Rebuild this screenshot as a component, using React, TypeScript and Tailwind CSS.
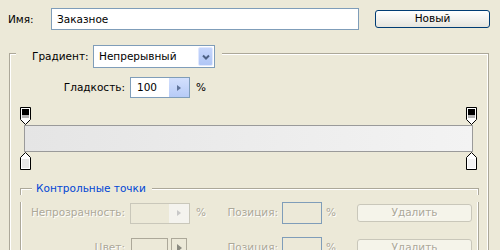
import React from "react"

const TopStop = () => (
    <svg width="11" height="18" viewBox="0 0 11 18" className="block">
        <path d="M0.5 0.5H10.5V12.5L5.5 17.5L0.5 12.5Z" fill="#fff" stroke="#000" />
        <rect x="2" y="2" width="7" height="6" fill="#000" />
        <rect x="2" y="8" width="7" height="3" fill="#b4b4b4" />
    </svg>
)

const BottomStop = ({ fill }: { fill: string }) => (
    <svg width="11" height="18" viewBox="0 0 11 18" className="block">
        <path d="M5.5 0.5L10.5 5.5V17.5H0.5V5.5Z" fill="#fff" stroke="#000" />
        <rect x="2" y="7" width="7" height="9" fill={fill} />
    </svg>
)

const dis = "text-[#ACA899] [text-shadow:1px_1px_0_#fff]"

export default function App() {
    return (
        <div className="w-[500px] h-[250px] overflow-hidden bg-[#ECE9D8] text-black text-[10.5px] font-['DejaVu_Sans',sans-serif]">

            {/* name row */}
            <div className="flex items-start pt-[8px] pl-[8px]">
                <div className="w-[43px] h-[22px] leading-[22px]">Имя:</div>
                <div className="w-[308px] h-[22px] border border-[#7F9DB9] bg-white pl-[5px] leading-[20px]">
                    Заказное
                </div>
                <div className="ml-[16px] mt-[2px] w-[115px] h-[18px] rounded-[3px] border border-[#003C74] bg-gradient-to-b from-white to-[#E6E5DE] flex items-center justify-center">
                    Новый
                </div>
            </div>

            {/* outer group */}
            <div className="mt-[15px] ml-[9px] w-[480px]">
                <div className="flex h-[23px]">
                    <div className="w-[7px] h-[15px] self-end border-t border-l border-[#ACA899] shadow-[inset_1px_1px_0_#fff]"></div>
                    <div className="ml-[16px] w-[61px] leading-[23px]">Градиент:</div>
                    <div className="w-[122px] h-[23px] border border-[#7F9DB9] bg-white flex items-center">
                        <div className="flex-1 pl-[5px]">Непрерывный</div>
                        <div className="w-[15px] h-[19px] mr-[1px] rounded-[2px] bg-gradient-to-b from-[#C6D6FC] to-[#B0C6F5] border border-[#E0E8FE] flex items-center justify-center">
                            <svg width="8" height="6" viewBox="0 0 8 6">
                                <path d="M1 1.5L4 4.5L7 1.5" fill="none" stroke="#4D6185" strokeWidth="2" />
                            </svg>
                        </div>
                    </div>
                    <div className="ml-[7px] flex-1 h-[15px] self-end border-t border-r border-[#ACA899] shadow-[inset_-1px_1px_0_#fff]"></div>
                </div>

                <div className="border-l border-r border-[#ACA899] shadow-[inset_1px_0_0_#fff,inset_-1px_0_0_#fff] pb-[20px]">
                    {/* smoothness */}
                    <div className="flex items-center pt-[9px]">
                        <div className="w-[115px] text-right">Гладкость:</div>
                        <div className="ml-[5px] w-[60px] h-[21px] border border-[#7F9DB9] bg-white flex">
                            <div className="flex-1 pl-[6px] leading-[19px]">100</div>
                            <div className="w-[20px] h-full bg-gradient-to-b from-[#D3E0FD] to-[#B7CBF7] flex items-center justify-center">
                                <svg width="4" height="6" viewBox="0 0 4 6">
                                    <path d="M0 0L4 3L0 6Z" fill="#5F7399" />
                                </svg>
                            </div>
                        </div>
                        <div className="ml-[6px]">%</div>
                    </div>

                    {/* gradient stops */}
                    <div className="mt-[9px] flex justify-between pl-[10px] pr-[11px]">
                        <TopStop />
                        <TopStop />
                    </div>
                    <div className="ml-[14px] mr-[15px] h-[27px] border border-[#9A9A9A] bg-gradient-to-r from-[#E5E5E5] to-[#F3F3F3]"></div>
                    <div className="flex justify-between pl-[10px] pr-[11px]">
                        <BottomStop fill="#E6E6E6" />
                        <BottomStop fill="#F3F3F3" />
                    </div>

                    {/* stops group */}
                    <div className="mt-[11px] ml-[10px] w-[459px]">
                        <div className="flex h-[14px]">
                            <div className="w-[12px] h-[7px] self-end border-t border-l border-[#ACA899] shadow-[inset_1px_1px_0_#fff]"></div>
                            <div className="ml-[4px] mr-[6px] leading-[14px] text-[#0046D5]">Контрольные точки</div>
                            <div className="flex-1 h-[7px] self-end border-t border-r border-[#ACA899] shadow-[inset_-1px_1px_0_#fff]"></div>
                        </div>
                        <div className="border-l border-r border-[#ACA899] shadow-[inset_1px_0_0_#fff,inset_-1px_0_0_#fff] pb-[20px]">
                            <div className="flex items-center mt-[7px] h-[22px]">
                                <div className={`w-[104px] text-right ${dis}`}>Непрозрачность:</div>
                                <div className="ml-[5px] w-[60px] h-[21px] border border-[#C9C7BA] flex">
                                    <div className="flex-1"></div>
                                    <div className="w-[20px] h-full bg-[#F4F3EE] flex items-center justify-center">
                                        <svg width="4" height="6" viewBox="0 0 4 6">
                                            <path d="M0 0L4 3L0 6Z" fill="#C8C8C8" />
                                        </svg>
                                    </div>
                                </div>
                                <div className={`w-[30px] pl-[6px] ${dis}`}>%</div>
                                <div className={`w-[62px] pr-[4px] text-right ${dis}`}>Позиция:</div>
                                <div className="w-[40px] h-[22px] border border-[#7F9DB9]"></div>
                                <div className={`ml-[4px] w-[31px] ${dis}`}>%</div>
                                <div className={`w-[115px] h-[18px] rounded-[3px] border border-[#C9C7BA] bg-[#F5F4EA] flex items-center justify-center ${dis}`}>
                                    Удалить
                                </div>
                            </div>
                            <div className="flex items-center mt-[13px] h-[22px]">
                                <div className={`w-[104px] text-right ${dis}`}>Цвет:</div>
                                <div className="ml-[6px] w-[37px] h-[20px] border border-[#ACA899]"></div>
                                <div className="ml-[3px] w-[16px] h-[20px] border border-[#ACA899] flex items-center justify-center">
                                    <svg width="5" height="8" viewBox="0 0 5 8">
                                        <path d="M0 0L5 4L0 8Z" fill="#8A8A80" />
                                    </svg>
                                </div>
                                <div className="w-[33px]"></div>
                                <div className={`w-[62px] pr-[4px] text-right ${dis}`}>Позиция:</div>
                                <div className="w-[40px] h-[22px] border border-[#7F9DB9]"></div>
                                <div className={`ml-[4px] w-[31px] ${dis}`}>%</div>
                                <div className={`w-[115px] h-[18px] rounded-[3px] border border-[#C9C7BA] bg-[#F5F4EA] flex items-center justify-center ${dis}`}>
                                    Удалить
                                </div>
                            </div>
                        </div>
                    </div>
                </div>
            </div>
        </div>
    )
}
